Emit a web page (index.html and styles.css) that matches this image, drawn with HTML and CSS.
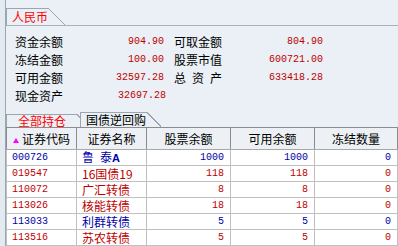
FILE: index.html
```html
<!DOCTYPE html>
<html lang="zh">
<head>
    <meta charset="UTF-8">
    <title>资金持仓</title>
    <link rel="stylesheet" href="styles.css">
</head>
<body>
    <div class="window">
        <div class="splitter"></div>
        <div class="main">
            <div class="tabbar tabbar-top">
                <div class="tab active"><span class="tab-label">人民币</span><span class="tab-edge"></span></div>
            </div>

            <div class="funds">
                <div class="pair"><span>资金余额</span><span class="num">904.90</span></div>
                <div class="pair"><span>可取金额</span><span class="num">804.90</span></div>
                <div class="pair"><span>冻结金额</span><span class="num">100.00</span></div>
                <div class="pair"><span>股票市值</span><span class="num">600721.00</span></div>
                <div class="pair"><span>可用金额</span><span class="num">32597.28</span></div>
                <div class="pair"><span>总&ensp;资&ensp;产</span><span class="num">633418.28</span></div>
                <div class="pair pair-wide"><span>现金资产</span><span class="num">32697.28</span></div>
            </div>

            <div class="tabbar tabbar-bottom">
                <div class="tab active"><span class="tab-label">全部持仓</span><span class="tab-edge"></span></div>
                <div class="tab back"><span class="tab-label">国债逆回购</span><span class="tab-edge"></span></div>
            </div>

            <table class="holdings">
                <colgroup>
                    <col style="width: 70px">
                    <col style="width: 70px">
                    <col style="width: 84px">
                    <col style="width: 84px">
                    <col style="width: 83px">
                </colgroup>
                <thead>
                    <tr>
                        <th><span class="sort-mark"></span>证券代码</th>
                        <th>证券名称</th>
                        <th>股票余额</th>
                        <th>可用余额</th>
                        <th>冻结数量</th>
                    </tr>
                </thead>
                <tbody>
                    <tr class="blue">
                        <td class="code">000726</td><td>鲁&ensp;泰<b>A</b></td><td class="qty">1000</td><td class="qty">1000</td><td class="qty">0</td>
                    </tr>
                    <tr class="red">
                        <td class="code">019547</td><td>16国债19</td><td class="qty">118</td><td class="qty">118</td><td class="qty">0</td>
                    </tr>
                    <tr class="red">
                        <td class="code">110072</td><td>广汇转债</td><td class="qty">8</td><td class="qty">8</td><td class="qty">0</td>
                    </tr>
                    <tr class="red">
                        <td class="code">113026</td><td>核能转债</td><td class="qty">18</td><td class="qty">18</td><td class="qty">0</td>
                    </tr>
                    <tr class="blue">
                        <td class="code">113033</td><td>利群转债</td><td class="qty">5</td><td class="qty">5</td><td class="qty">0</td>
                    </tr>
                    <tr class="red">
                        <td class="code">113516</td><td>苏农转债</td><td class="qty">5</td><td class="qty">5</td><td class="qty">0</td>
                    </tr>
                </tbody>
            </table>
        </div>
    </div>
</body>
</html>
```

FILE: styles.css
```css
body {
    margin: 0;
    background-color: #eaf0f5;
    font-family: "Noto Sans CJK SC", sans-serif;
    font-size: 12px;
    color: #000;
    overflow: hidden;
}
.window {
    display: flex;
    height: 246px;
}
.splitter {
    width: 5px;
    background-color: #e3eaf0;
    border-right: 1px solid #9aa6b2;
}
.main {
    flex: 1;
    min-width: 0;
    display: flex;
    flex-direction: column;
}
.tabbar {
    display: flex;
    align-items: flex-end;
}
.tabbar-top {
    height: 25px;
    border-bottom: 1px solid #a7b2bf;
}
.tab {
    display: flex;
}
.tab-label {
    border-left: 1px solid #9aa6b2;
    border-top: 1px solid #9aa6b2;
    background-color: #eaf0f5;
    white-space: nowrap;
}
.tab-edge {
    background: linear-gradient(to top right, #eaf0f5 calc(50% - 0.7px), #9aa6b2 calc(50% - 0.7px), #9aa6b2 calc(50% + 0.7px), transparent calc(50% + 0.7px));
}
.tab.active .tab-label {
    color: #ff0000;
}
.tabbar-top .tab {
    height: 17px;
}
.tabbar-top .tab-label {
    padding: 0 0 0 5px;
    line-height: 16px;
}
.tabbar-top .tab-edge {
    width: 17px;
}
.funds {
    display: grid;
    grid-template-columns: 149px 149px;
    column-gap: 10px;
    padding: 7px 0 0 9px;
    line-height: 18px;
}
.pair {
    display: flex;
    justify-content: space-between;
}
.pair-wide {
    margin-right: -2px;
}
.num {
    font-family: "Liberation Mono", monospace;
    font-size: 10px;
    color: #c00000;
}
.tabbar-bottom {
    height: 15px;
    margin-top: 7px;
}
.tabbar-bottom .tab {
    height: 13px;
}
.tabbar-bottom .tab-label {
    padding: 0 10px 0 11px;
    line-height: 12px;
}
.tabbar-bottom .tab-edge {
    width: 14px;
}
.tabbar-bottom .tab.back {
    height: 15px;
    margin-left: -10px;
}
.tabbar-bottom .tab.back .tab-label {
    padding: 0 1px 0 5px;
    line-height: 14px;
}
.holdings {
    border-collapse: collapse;
    table-layout: fixed;
    width: 391px;
    background-color: #fff;
}
.holdings thead tr {
    height: 22px;
}
.holdings tbody tr {
    height: 16px;
}
.holdings th {
    padding: 0;
    font-weight: normal;
    line-height: 14px;
    background-color: #edf1f5;
    border: 1px solid #8c8c8c;
    border-bottom-color: #a8a8a8;
    white-space: nowrap;
}
.holdings td {
    padding: 0 5px;
    line-height: 13px;
    border: 1px solid #c0c0c0;
    white-space: nowrap;
    overflow: hidden;
}
.holdings td b {
    font-family: "Liberation Sans", sans-serif;
    font-size: 11px;
}
.holdings td.code {
    font-family: "Liberation Mono", monospace;
    font-size: 10px;
}
.holdings td.qty {
    font-family: "Liberation Mono", monospace;
    font-size: 10px;
    text-align: right;
    padding-right: 6px;
}
.sort-mark {
    display: inline-block;
    width: 0;
    height: 0;
    border-left: 3px solid transparent;
    border-right: 3px solid transparent;
    border-bottom: 5px solid #ff00ff;
    margin-right: 3px;
    vertical-align: 1px;
}
tr.red td {
    color: #c00000;
}
tr.blue td {
    color: #0000aa;
}
```
